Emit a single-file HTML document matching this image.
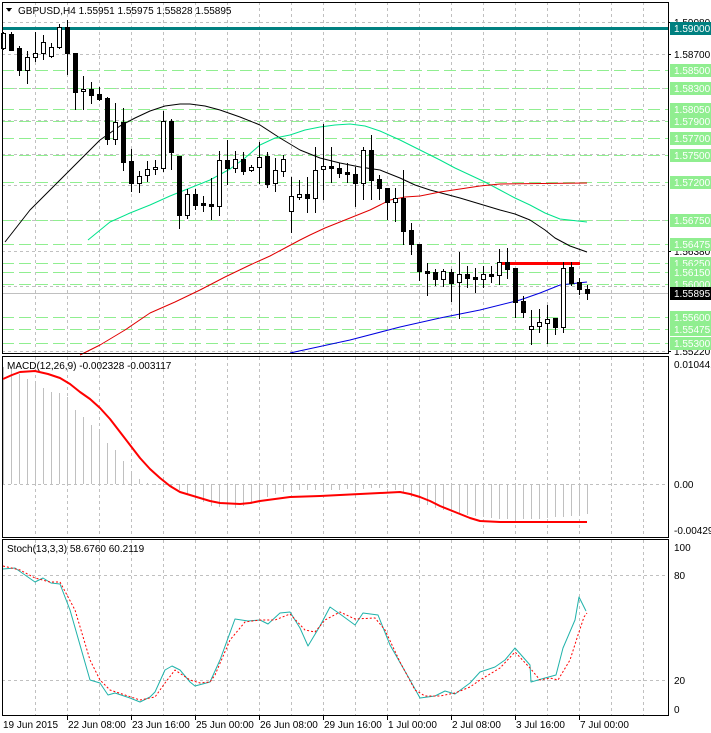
<!DOCTYPE html>
<html><head><meta charset="utf-8"><style>
html,body{margin:0;padding:0;background:#fff;width:711px;height:733px;overflow:hidden}
svg{display:block;font-family:"Liberation Sans",sans-serif}
</style></head><body>
<svg id="s" width="711" height="733" xmlns="http://www.w3.org/2000/svg" shape-rendering="crispEdges"></svg>
<script>
const s=document.getElementById('s');let h='';
const W=668;
for(let x=35;x<W;x+=32){
 h+=`<line x1="${x+.5}" y1="2" x2="${x+.5}" y2="353" stroke="#c0c0c0" stroke-dasharray="3,3"/>`;
 h+=`<line x1="${x+.5}" y1="357" x2="${x+.5}" y2="537" stroke="#c0c0c0" stroke-dasharray="3,3"/>`;
 h+=`<line x1="${x+.5}" y1="540" x2="${x+.5}" y2="715" stroke="#c0c0c0" stroke-dasharray="3,3"/>`;
}
[22,54,88,120,154,185,220,251,286,351,484,575,680].forEach(y=>h+=`<line x1="2" y1="${y+.5}" x2="${W}" y2="${y+.5}" stroke="#c0c0c0" stroke-dasharray="3,3"/>`);
const lv=[[70,'1.58500'],[88,'1.58300'],[109,'1.58050'],[121,'1.57900'],[138,'1.57700'],[155,'1.57500'],[182,'1.57200'],[220,'1.56750'],[244,'1.56475'],[263,'1.56250'],[272,'1.56150'],[284,'1.56000'],[317,'1.55600'],[329,'1.55475'],[343,'1.55300']];
lv.forEach(([y])=>h+=`<line x1="2" y1="${y+.5}" x2="${W}" y2="${y+.5}" stroke="#90ee90" stroke-dasharray="12,5"/>`);
h+=`<line x1="2" y1="293.5" x2="${W}" y2="293.5" stroke="#c0c0c0"/>`;
const pl=(p,c,w,d)=>h+=`<polyline fill="none" stroke="${c}" stroke-width="${w||1}" ${d?'stroke-dasharray="'+d+'"':''} shape-rendering="auto" stroke-linejoin="round" points="${p}"/>`;
pl("5,242 30,210 60,180 85,155 100,140 120,126 135,118 150,111 165,106 180,104 190,104 205,106 220,110 240,117 260,125 280,138 300,150 320,158 340,163 360,167 380,170 400,178 415,185 430,190 445,194 460,198 480,204 500,210 515,214 530,220 545,230 555,238 570,246 587,252","#000");
pl("88,240 110,222 130,213 150,205 170,196 190,188 210,180 230,169 245,158 260,145 275,138 290,135 305,130 320,127 335,125 350,124 365,126 380,131 400,140 420,150 440,160 455,168 470,175 485,182 500,190 515,198 530,205 545,213 560,219 587,222","#00e38c");
pl("80,355 100,345 125,330 150,313 175,302 200,290 225,277 250,265 270,256 285,248 300,240 310,235 325,228 340,222 355,216 370,210 380,205 390,200 405,197 420,196 440,192 460,189 480,186 500,184 587,183","#e00000");
pl("290,353 350,340 400,327 440,318 480,310 520,300 540,293 560,285 587,282","#0000e0");
h+=`<rect x="2" y="27" width="${W-2}" height="3" fill="#008080"/>`;
h+=`<rect x="500" y="262" width="80" height="3" fill="#ff0000"/>`;
const C=[[1,33,48,32,50],[0,34,50,32,51],[0,48,70,46,76],[1,57,70,51,84],[1,53,57,32,62],[1,42,53,35,60],[1,47,56,43,58],[1,27,47,24,49],[0,27,53,20,75],[0,53,92,53,110],[1,89,91,76,110],[0,89,95,82,104],[0,94,99,87,101],[0,98,139,97,145],[1,122,139,103,145],[0,122,162,108,171],[0,161,183,149,192],[1,176,183,171,193],[1,169,175,161,182],[1,167,169,160,175],[1,121,168,111,172],[0,121,152,119,170],[0,156,215,156,229],[1,194,215,189,219],[0,194,205,189,210],[0,203,205,196,212],[0,204,206,178,220],[1,160,206,151,216],[0,160,168,140,185],[1,159,168,151,173],[0,159,171,152,175],[1,167,170,165,172],[1,157,167,142,184],[0,156,184,152,188],[1,170,183,158,192],[1,159,171,155,177],[1,196,211,177,233],[1,194,197,180,200],[0,194,198,177,213],[1,170,198,147,213],[1,166,169,124,200],[0,166,168,147,183],[0,168,173,163,178],[0,172,174,163,183],[0,174,183,167,207],[1,150,183,147,200],[0,150,180,135,200],[0,179,188,175,200],[0,188,202,188,220],[1,198,202,188,222],[0,198,231,170,245],[0,230,244,223,255],[0,244,271,244,281],[0,271,273,263,296],[0,272,279,269,286],[1,271,279,269,287],[0,272,283,269,302],[1,274,282,252,319],[0,274,278,266,288],[0,277,279,268,293],[1,274,279,266,288],[0,274,276,266,283],[1,262,275,249,285],[0,262,269,248,279],[0,268,302,268,318],[0,301,312,296,318],[1,326,329,310,345],[1,322,326,309,333],[1,319,323,305,344],[0,318,327,318,335],[1,268,327,262,333],[0,267,283,262,286],[0,282,289,278,295],[0,289,293,285,300]];
C.forEach((c,i)=>{const x=3+8*i;
 h+=`<line x1="${x+.5}" y1="${c[3]}" x2="${x+.5}" y2="${c[4]}" stroke="#000"/>`;
 let bh=Math.max(c[2]-c[1],1);
 if(c[0])h+=`<rect x="${x-2+.5}" y="${c[1]+.5}" width="4" height="${Math.max(bh,2)}" fill="#fff" stroke="#000"/>`;
 else h+=`<rect x="${x-2}" y="${c[1]}" width="5" height="${bh+1}" fill="#000"/>`;
});
const M=[367,369,374,379,383,388,392,393,397,410,417,425,432,443,450,461,472,479,483,485,487,488,490,494,500,502,506,507,509,508,506,504,500,497,494,492,491,490,490,490,490,490,490,489,489,489,488,488,488,490,493,497,501,505,508,510,512,514,515,516,517,518,519,519,519,519,519,519,518,517,517,516,515,514];
M.forEach((v,i)=>{const x=3+8*i;h+=`<line x1="${x+.5}" y1="484" x2="${x+.5}" y2="${v}" stroke="#c0c0c0"/>`;});
pl("3,379 12,375 20,372 35,371 48,374 60,378 70,384 80,392 90,399 100,408 110,419 120,432 130,445 140,458 150,469 160,478 170,486 180,492 190,495 200,498 210,501 220,503 240,504 250,503 260,501 275,499 290,497 320,496 360,494 380,493 400,492 410,494 420,497 430,501 440,506 450,510 460,514 470,518 480,521 500,522 587,522","#ff0000",2);
pl("3,569 15,568 25,575 35,582 43,578 51,583 60,584 70,610 90,680 100,683 108,695 115,693 130,698 140,702 150,697 155,692 165,670 172,666 180,670 190,682 195,686 210,682 220,660 235,619 248,621 260,620 268,624 280,613 290,612 300,628 308,646 320,626 330,607 340,614 355,625 363,613 378,615 390,645 410,680 420,698 435,696 445,691 455,694 470,683 480,672 495,667 505,660 515,648 530,665 531,682 545,678 556,675 563,648 575,620 579,597 586,611","#20b2aa");
pl("3,566 20,570 35,578 50,582 60,582 75,610 90,660 100,680 110,690 125,695 140,700 155,697 165,683 175,670 190,680 200,683 210,682 215,675 230,640 245,622 260,620 275,620 290,614 305,630 315,632 325,620 340,612 355,619 375,618 385,630 400,662 415,690 425,696 440,696 455,693 470,687 480,680 500,668 515,652 530,668 540,680 550,678 558,680 570,660 578,635 584,617 587,613","#ff0000",1,"2,2");
h+=`<rect x="2.5" y="2.5" width="${W-2}" height="351" fill="none" stroke="#000"/>`;
h+=`<rect x="2.5" y="356.5" width="${W-2}" height="181" fill="none" stroke="#000"/>`;
h+=`<rect x="2.5" y="539.5" width="${W-2}" height="176" fill="none" stroke="#000"/>`;
const T=(x,y,t,c,fs)=>h+=`<text x="${x}" y="${y}" font-size="${fs||10}" fill="${c||'#000'}">${t}</text>`;
[[22,'1.59080'],[54,'1.58700'],[251,'1.56380'],[351,'1.55220']].forEach(([y,t])=>{h+=`<line x1="${W}" y1="${y+.5}" x2="${W+3}" y2="${y+.5}" stroke="#000"/>`;T(674,y+4,t);});
lv.forEach(([y,t])=>{h+=`<rect x="670" y="${y-6}" width="41" height="13" fill="#90ee90"/>`;T(674,y+4,t,'#fff');});
h+=`<rect x="670" y="22" width="41" height="13" fill="#008080"/>`;T(674,32,'1.59000','#fff');
h+=`<rect x="670" y="287" width="41" height="13" fill="#000"/>`;T(674,297,'1.55895','#fff');
T(674,368,'0.010441');T(674,488,'0.00');T(674,534,'-0.004295');
T(674,551,'100');T(674,579,'80');T(674,684,'20');T(674,713,'0');
h+=`<path d="M6 8h6l-3 4z" fill="#000"/>`;
T(18,14,'GBPUSD,H4  1.55951 1.55975 1.55828 1.55895');
T(7,369,'MACD(12,26,9) -0.002328 -0.003117');
T(7,552,'Stoch(13,3,3) 58.6760 60.2119');
const tl=[[3,'19 Jun 2015'],[67,'22 Jun 08:00'],[131,'23 Jun 16:00'],[195,'25 Jun 00:00'],[259,'26 Jun 08:00'],[323,'29 Jun 16:00'],[387,'1 Jul 00:00'],[451,'2 Jul 08:00'],[515,'3 Jul 16:00'],[579,'7 Jul 00:00']];
tl.forEach(([x,t],i)=>{if(i)h+=`<line x1="${x+.5}" y1="716" x2="${x+.5}" y2="720" stroke="#000"/>`;T(i?x+1:x,728,t,'#000',10);});
s.innerHTML=h;
</script>
</body></html>
